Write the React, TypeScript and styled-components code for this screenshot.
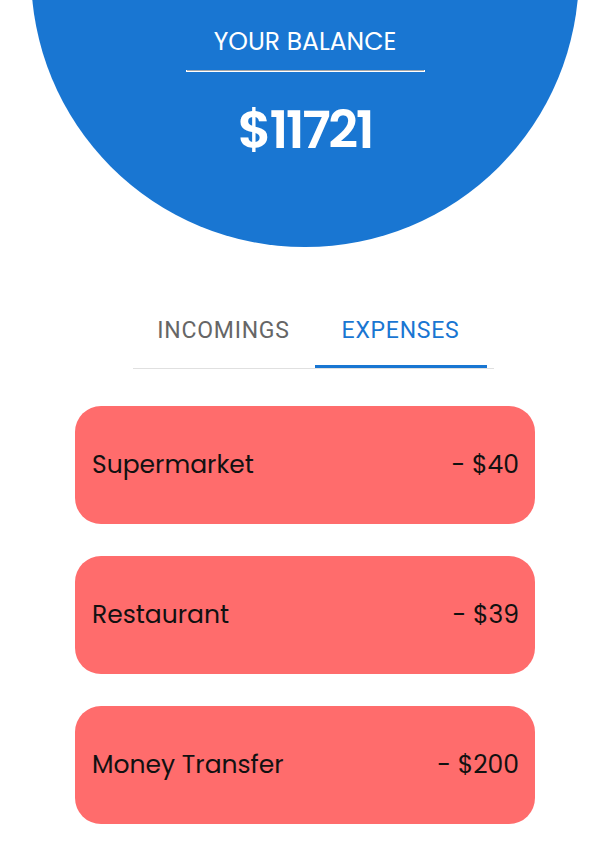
import React, { useState } from "react";
import styled, { createGlobalStyle } from "styled-components";

const GlobalStyle = createGlobalStyle`
  html, body {
    margin: 0;
    padding: 0;
    background: #ffffff;
    overflow-x: hidden;
  }
  body {
    font-family: "Poppins", "Open Sans", sans-serif;
  }
  * { box-sizing: border-box; }
`;

const Page = styled.div`
  display: flex;
  flex-direction: column;
  align-items: center;
  width: 100%;
  padding: 0 0 32px 2px;
`;

const Circle = styled.header`
  width: 90vw;
  height: 90vw;
  margin-top: -300px;
  border-radius: 50%;
  background: #1976d2;
  color: #ffffff;
  display: flex;
  flex-direction: column;
  align-items: center;
  padding-top: 324px;
`;

const Title = styled.h2`
  margin: 0;
  font-family: "Poppins", "Open Sans", sans-serif;
  font-weight: 400;
  font-size: 25px;
  line-height: 36px;
  text-transform: uppercase;
`;

const Rule = styled.hr`
  width: 237px;
  margin: 10px 0 0;
  height: 0;
  border: none;
  border-top: 1px solid #a8a8a8;
  border-bottom: 1px solid #ffffff;
  box-shadow: 1px 0 0 #fff, -1px 0 0 #fff;
`;

const Amount = styled.div`
  margin-top: 28px;
  font-family: "Poppins", "Open Sans", sans-serif;
  font-weight: 600;
  font-size: 52px;
  line-height: 60px;
  letter-spacing: -2.4px;
`;

const TabBar = styled.nav`
  margin: 48px 0 0 16px;
  display: flex;
  width: 361px;
  border-bottom: 1px solid #e0e0e0;
`;

const Tab = styled.button<{ $active?: boolean; $w: number }>`
  width: ${(p) => p.$w}px;
  height: 73px;
  display: flex;
  align-items: center;
  justify-content: center;
  background: none;
  border: none;
  border-bottom: 3px solid ${(p) => (p.$active ? "#1976d2" : "transparent")};
  padding: 0;
  cursor: pointer;
  font-family: Roboto, "Liberation Sans", sans-serif;
  font-weight: 400;
  font-size: 23px;
  letter-spacing: 0.75px;
  text-transform: uppercase;
  color: ${(p) => (p.$active ? "#1976d2" : "#666666")};
`;

const List = styled.section`
  margin-top: 37px;
  display: flex;
  flex-direction: column;
  gap: 32px;
  width: 460px;
`;

const Card = styled.div`
  height: 118px;
  border-radius: 26px;
  background: #ff6c6c;
  display: flex;
  align-items: center;
  justify-content: space-between;
  padding: 0 16px 0 17px;
  font-family: "Poppins", "Open Sans", sans-serif;
  font-size: 25px;
  color: #111111;
`;

const Label = styled.span``;
const Value = styled.span``;

const expenses = [
  { name: "Supermarket", amount: 40 },
  { name: "Restaurant", amount: 39 },
  { name: "Money Transfer", amount: 200 },
];

export default function App() {
  const [tab, setTab] = useState<"in" | "ex">("ex");
  return (
    <>
      <GlobalStyle />
      <Page>
        <Circle>
          <Title>Your Balance</Title>
          <Rule />
          <Amount>$11721</Amount>
        </Circle>
        <TabBar>
          <Tab $w={182} $active={tab === "in"} onClick={() => setTab("in")}>
            Incomings
          </Tab>
          <Tab $w={172} $active={tab === "ex"} onClick={() => setTab("ex")}>
            Expenses
          </Tab>
        </TabBar>
        <List>
          {expenses.map((e) => (
            <Card key={e.name}>
              <Label>{e.name}</Label>
              <Value>- ${e.amount}</Value>
            </Card>
          ))}
        </List>
      </Page>
    </>
  );
}
